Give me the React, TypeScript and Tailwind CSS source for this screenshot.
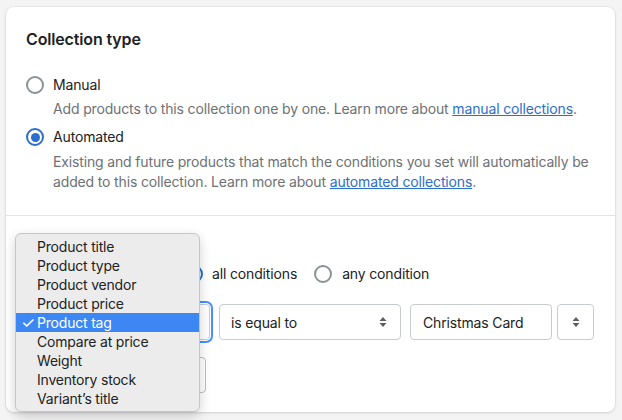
const menuItems = [
  "Product title",
  "Product type",
  "Product vendor",
  "Product price",
  "Product tag",
  "Compare at price",
  "Weight",
  "Inventory stock",
  "Variant’s title",
];

function Radio({ checked }: { checked?: boolean }) {
  return checked ? (
    <span className="flex size-[18px] shrink-0 items-center justify-center rounded-full border-2 border-[#2c6ecb] bg-white">
      <span className="size-[9px] rounded-full bg-[#2c6ecb]" />
    </span>
  ) : (
    <span className="size-[18px] shrink-0 rounded-full border-2 border-[#8c9196] bg-white" />
  );
}

function Arrows() {
  return (
    <svg width="8" height="12" viewBox="0 0 8 12" aria-hidden="true">
      <path d="M4 1 7.5 5h-7z" fill="#5c5f62" />
      <path d="M4 11 .5 7h7z" fill="#5c5f62" />
    </svg>
  );
}

export default function App() {
  return (
    <div
      className="h-[420px] w-[622px] overflow-hidden bg-[#f4f4f4] pl-[6px] pt-[7px] text-[14px] tracking-[-0.15px] text-[#202223]"
      style={{ fontFamily: 'Inter, "Noto Sans", sans-serif' }}
    >
      <div className="relative h-[405px] w-[609px] rounded-lg bg-white shadow-[0_0_0_1px_rgba(63,63,68,0.05),0_1px_3px_rgba(63,63,68,0.15)]">
        {/* collection type */}
        <div className="px-5 pb-[23px] pt-5">
          <h2 className="text-[16px] font-semibold leading-6">Collection type</h2>
          <div className="mt-6 flex flex-col gap-2">
            <div>
              <label className="flex h-5 items-center gap-[9px] leading-5">
                <Radio />
                Manual
              </label>
              <p className="mt-1 pl-[27px] leading-5 text-[#6d7175]">
                Add products to this collection one by one. Learn more about{" "}
                <a className="text-[#2c6ecb] underline">manual collections</a>.
              </p>
            </div>
            <div>
              <label className="flex h-5 items-center gap-[9px] leading-5">
                <Radio checked />
                Automated
              </label>
              <p className="mt-[5px] pl-[27px] leading-5 text-[#6d7175]">
                Existing and future products that match the conditions you set
                will automatically be added to this collection. Learn more
                about{" "}
                <a className="text-[#2c6ecb] underline">automated collections</a>.
              </p>
            </div>
          </div>
        </div>

        {/* conditions */}
        <div className="border-t border-[#e1e3e5] px-5 pt-5">
          <h2 className="text-[16px] font-semibold leading-6">Conditions</h2>
          <div className="mt-[4px] flex h-5 items-center leading-5">
            <span className="w-[159px]">Products must match:</span>
            <label className="flex items-center gap-[9px]">
              <Radio checked />
              all conditions
            </label>
            <label className="ml-[17px] flex items-center gap-[10px]">
              <Radio />
              any condition
            </label>
          </div>

          <div className="mt-5 flex items-center">
            <div className="flex h-[36px] w-[184px] items-center justify-between rounded-[4px] border border-[#c9cccf] px-3 outline-2 outline-offset-1 outline-[#458fff]">
              <span>Product tag</span>
              <Arrows />
            </div>
            <div className="ml-[9px] flex h-[36px] w-[182px] items-center justify-between rounded-[4px] border border-[#c9cccf] pl-[11px] pr-[13px]">
              <span>is equal to</span>
              <Arrows />
            </div>
            <div className="ml-[9px] flex h-[36px] w-[142px] items-center rounded-[4px] border border-[#c9cccf] px-3">
              Christmas Card
            </div>
            <div className="ml-[5px] flex h-[36px] w-[37px] items-center justify-center rounded-[4px] border border-[#c9cccf]">
              <Arrows />
            </div>
          </div>

          <button className="mt-[17px] flex h-[36px] w-[180px] items-center justify-center rounded-[4px] border border-[#babfc3] bg-white font-medium">
            Add another condition
          </button>
        </div>

        {/* open select menu */}
        <ul className="absolute left-[9px] top-[226px] w-[185px] rounded-[6px] border border-[#c6c6c6] bg-[#ececec] py-[3px] text-[14px] leading-[19px] tracking-[-0.2px] text-[#222] shadow-[0_4px_12px_rgba(0,0,0,0.18)]">
          {menuItems.map((item) => {
            const active = item === "Product tag";
            return (
              <li
                key={item}
                className={
                  active
                    ? "flex h-[19px] items-center bg-[#3d87f4] text-white"
                    : "flex h-[19px] items-center"
                }
              >
                <span className="w-[21px] pl-[5px] text-[16px] leading-[19px]">
                  {active ? "✓" : ""}
                </span>
                {item}
              </li>
            );
          })}
        </ul>
      </div>
    </div>
  );
}
